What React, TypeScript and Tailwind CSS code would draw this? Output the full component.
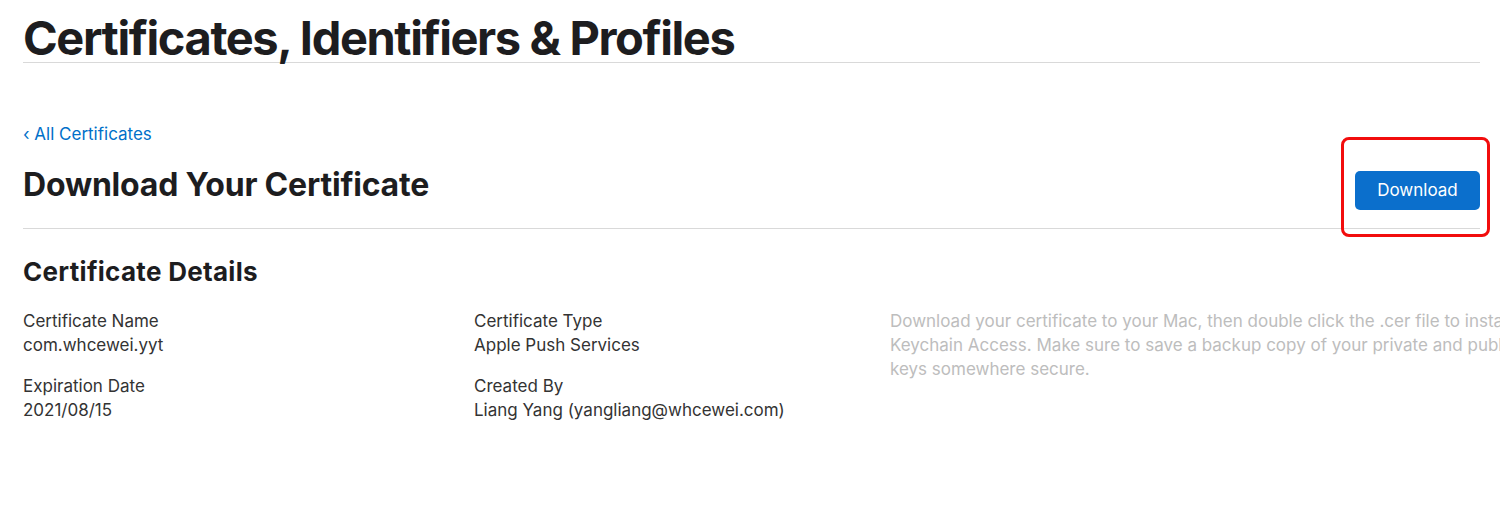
export default function App() {
  const details = [
    [
      { label: "Certificate Name", value: "com.whcewei.yyt" },
      { label: "Expiration Date", value: "2021/08/15" },
    ],
    [
      { label: "Certificate Type", value: "Apple Push Services" },
      { label: "Created By", value: "Liang Yang (yangliang@whcewei.com)" },
    ],
  ];

  return (
    <div
      className="w-[1500px] h-[519px] overflow-hidden bg-white text-[#1d1d1f]"
      style={{ fontFamily: "Inter, 'Noto Sans', sans-serif" }}
    >
      <div className="ml-[23px] w-[1457px]">
        <h1 className="pt-[14px] text-[47px] leading-[48px] font-bold tracking-[-1.4px] border-b border-[#d9d9d9]">
          Certificates, Identifiers &amp; Profiles
        </h1>

        <a href="#" className="mt-[59px] block text-[17px] leading-[24px] text-[#0070c9]">
          ‹ All Certificates
        </a>

        <div className="flex items-start justify-between pt-[19px] pb-[18px] border-b border-[#d9d9d9]">
          <h2 className="text-[32px] leading-[40px] font-bold tracking-[-0.2px]">
            Download Your Certificate
          </h2>
          <div className="relative mt-[6px]">
            <button className="h-[39px] w-[125px] rounded-[5px] bg-[#0b6fcc] text-white text-[17px]">
              Download
            </button>
            <div className="absolute -left-[14px] -top-[34px] -right-[10px] -bottom-[27px] rounded-[8px] border-[3px] border-[#f20d0d]" />
          </div>
        </div>

        <h3 className="mt-[27px] text-[26px] leading-[32px] font-bold tracking-[0.3px]">
          Certificate Details
        </h3>

        <div className="mt-[21px] flex text-[17px] leading-[24px] text-[#333]">
          {details.map((col, i) => (
            <div key={i} className="w-[451px] shrink-0 flex flex-col gap-[17px]">
              {col.map((d) => (
                <div key={d.label}>
                  <div>{d.label}</div>
                  <div>{d.value}</div>
                </div>
              ))}
            </div>
          ))}
          <p className="ml-[-35px] w-[652px] shrink-0 text-[#bdbdbd]">
            Download your certificate to your Mac, then double click the .cer file to install in
            Keychain Access. Make sure to save a backup copy of your private and public keys
            somewhere secure.
          </p>
        </div>
      </div>
    </div>
  );
}
